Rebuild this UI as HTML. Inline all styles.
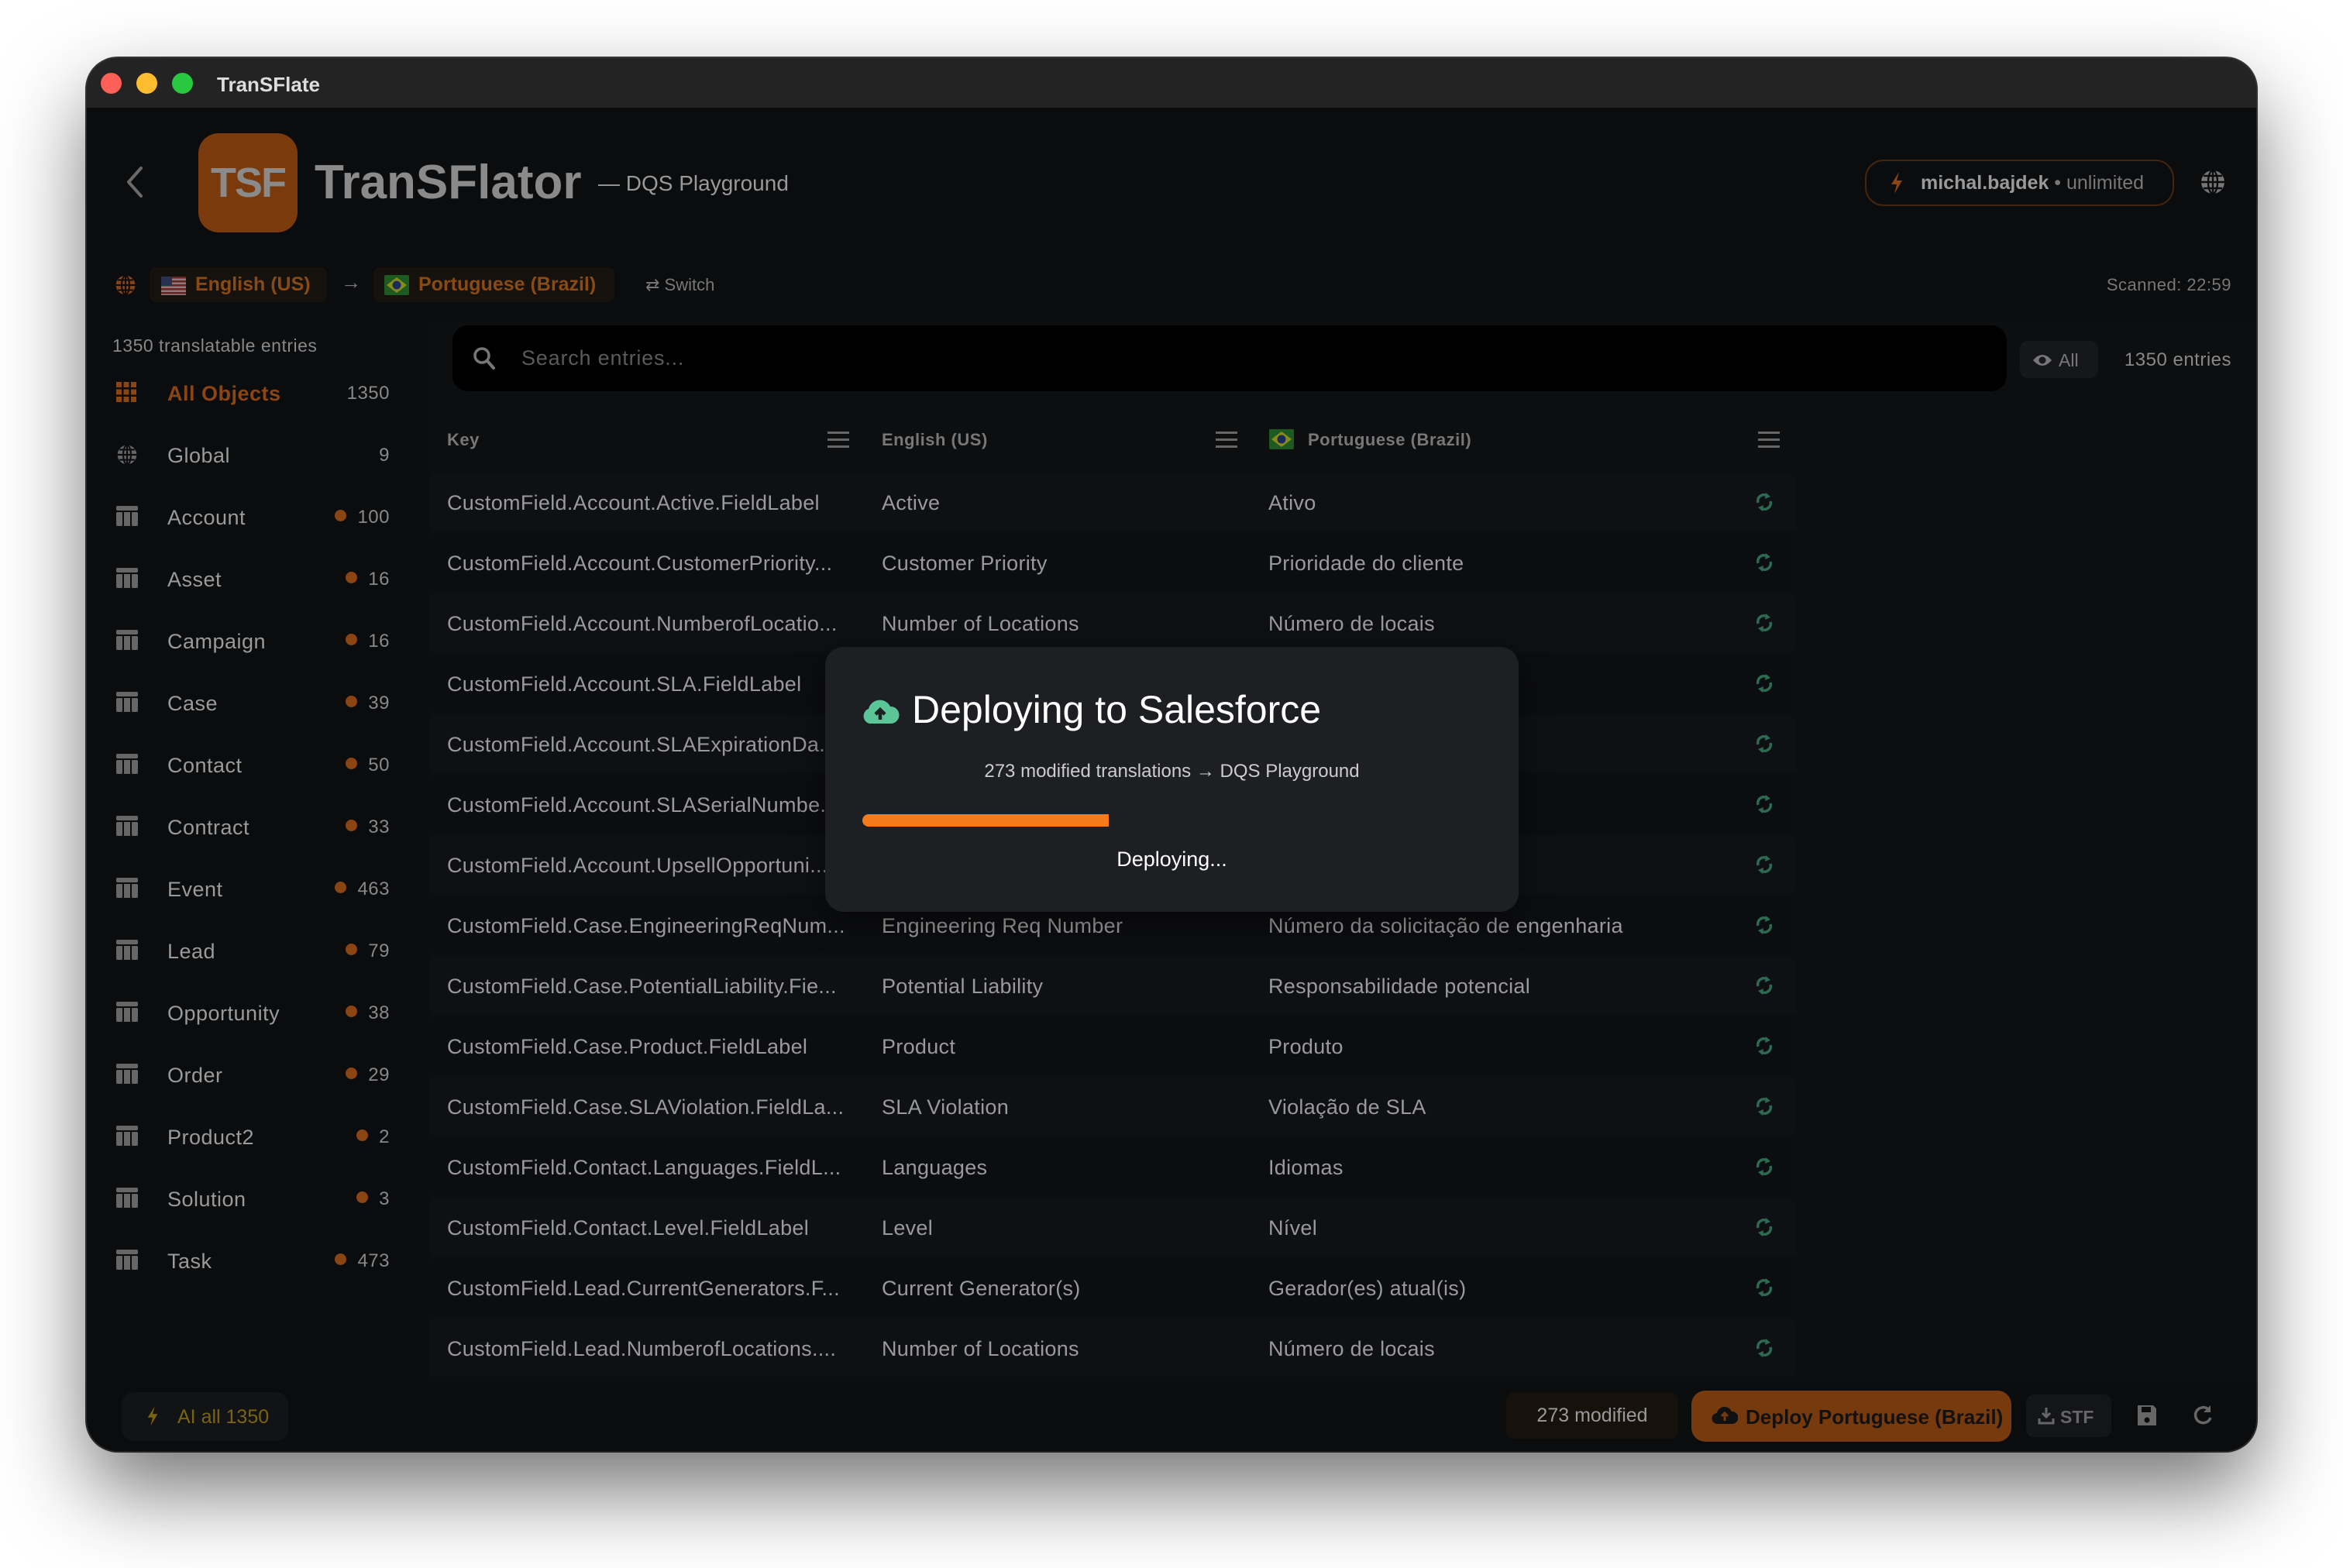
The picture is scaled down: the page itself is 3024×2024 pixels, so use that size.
<!DOCTYPE html>
<html><head><meta charset="utf-8"><style>
*{margin:0;padding:0;box-sizing:border-box}
body{width:3024px;height:2024px;background:#fff;position:relative;overflow:hidden;font-family:"Liberation Sans",sans-serif}
.win{position:absolute;left:112px;top:75px;width:2800px;height:1798px;border-radius:40px;background:#0b0c0e;overflow:hidden;box-shadow:0 50px 110px rgba(0,0,0,.55),0 0 0 2px #3a3a3a}
.tb{position:absolute;left:0;top:0;width:100%;height:64px;background:#232323}
.dot{position:absolute;top:19px;width:27px;height:27px;border-radius:50%}
.a{position:absolute;white-space:nowrap}
.it{position:absolute;left:0;width:391px;height:60px}
.it svg{position:absolute;left:38px;top:16px}
.lbl{position:absolute;left:104px;top:16px;font-size:27px;color:#9a9a9a;letter-spacing:.5px}
.cnt{position:absolute;right:0;top:17px;font-size:24px;color:#888;letter-spacing:.5px}
.od{display:inline-block;width:15px;height:15px;border-radius:50%;background:#8a4512;margin-right:14px;vertical-align:2px}
.row{position:absolute;left:443px;width:1763px;height:74px;background:#0f1013;border-radius:6px}
.row.b{background:#0c0d10}
.row div{position:absolute;top:23px;font-size:27px;color:#9a9a9a;white-space:nowrap;letter-spacing:.3px}
.row .k{left:22px}.row .e{left:583px}.row .p{left:1082px}
.row svg{position:absolute;left:1710px;top:24px}
.menu{position:absolute;width:28px;height:21px;border-top:3px solid #666;border-bottom:3px solid #666}
.menu i{display:block;margin-top:6px;height:3px;background:#666}
.hd{position:absolute;top:480px;font-size:22px;font-weight:bold;color:#777;letter-spacing:.5px}
</style></head><body>
<svg width="0" height="0" style="position:absolute"><defs>
<symbol id="tbl" viewBox="0 0 28 26"><rect x="0" y="0" width="28" height="6" rx="2" fill="#666"/><rect x="0" y="8" width="8" height="18" rx="1.5" fill="#666"/><rect x="10" y="8" width="8" height="18" fill="#666"/><rect x="20" y="8" width="8" height="18" rx="1.5" fill="#666"/></symbol>
<symbol id="rf" viewBox="0 0 24 26"><path d="M4 14 A8 8 0 0 1 16 5" stroke="#2d6a52" stroke-width="3.5" fill="none"/><path d="M14 1 L20 6 L13 9Z" fill="#2d6a52"/><path d="M20 12 A8 8 0 0 1 8 21" stroke="#2d6a52" stroke-width="3.5" fill="none"/><path d="M10 25 L4 20 L11 17Z" fill="#2d6a52"/></symbol>
</defs></svg>
<div class="win">
 <div class="tb">
  <div class="dot" style="left:18px;background:#fe5f57"></div>
  <div class="dot" style="left:64px;background:#febc2e"></div>
  <div class="dot" style="left:110px;background:#28c840"></div>
  <div class="a" style="left:168px;top:19px;font-size:26px;font-weight:bold;color:#ddd">TranSFlate</div>
 </div>

 <svg class="a" style="left:46px;top:138px" width="30" height="44" viewBox="0 0 30 44"><path d="M24 4 L8 22 L24 40" stroke="#6a6a6a" stroke-width="4" fill="none" stroke-linecap="round" stroke-linejoin="round"/></svg>
 <div class="a" style="left:144px;top:97px;width:128px;height:128px;border-radius:26px;background:#7a3a0c;color:#8a8a8a;font-weight:bold;font-size:54px;line-height:128px;text-align:center;letter-spacing:-2px">TSF</div>
 <div class="a" style="left:294px;top:126px;font-size:62px;font-weight:bold;color:#8a8a8a;line-height:70px">TranSFlator</div>
 <div class="a" style="left:660px;top:146px;font-size:28px;color:#999">— DQS Playground</div>
 <div class="a" style="left:2295px;top:131px;width:399px;height:60px;border:2px solid #43260f;border-radius:24px"></div>
 <svg class="a" style="left:2326px;top:146px" width="20" height="30" viewBox="0 0 20 30"><path d="M13 1 L3 17 H10 L7 29 L17 12 H10 Z" fill="#8a4512"/></svg>
 <div class="a" style="left:2367px;top:147px;font-size:25px;font-weight:bold;color:#999">michal.bajdek <span style="font-weight:normal;color:#777">• unlimited</span></div>
 <svg class="a" style="left:2727px;top:143px" width="34" height="34" viewBox="0 0 34 34"><circle cx="17" cy="17" r="15" fill="#777"/><g stroke="#0b0c0e" stroke-width="2.4" fill="none"><ellipse cx="17" cy="17" rx="6" ry="15"/><path d="M2 17H32M5 9H29M5 25H29M17 2V32"/></g></svg>

 <svg class="a" style="left:36px;top:279px" width="28" height="28" viewBox="0 0 34 34"><circle cx="17" cy="17" r="15" fill="#8a4512"/><g stroke="#0b0c0e" stroke-width="2.6" fill="none"><ellipse cx="17" cy="17" rx="6" ry="15"/><path d="M2 17H32M5 9H29M5 25H29M17 2V32"/></g></svg>
 <div class="a" style="left:81px;top:270px;width:229px;height:45px;background:#15110d;border-radius:8px"></div>
 <svg class="a" style="left:96px;top:282px" width="32" height="24" viewBox="0 0 32 24"><rect width="32" height="24" fill="#8a7a7a"/><g fill="#6a2222"><rect y="0" width="32" height="2.5"/><rect y="5" width="32" height="2.5"/><rect y="10" width="32" height="2.5"/><rect y="15" width="32" height="2.5"/><rect y="20" width="32" height="2.5"/></g><rect width="14" height="12" fill="#2a3050"/></svg>
 <div class="a" style="left:140px;top:278px;font-size:25px;font-weight:bold;color:#8a4a14">English (US)</div>
 <div class="a" style="left:328px;top:274px;font-size:26px;color:#777">→</div>
 <div class="a" style="left:370px;top:270px;width:311px;height:45px;background:#15110d;border-radius:8px"></div>
 <svg class="a" style="left:384px;top:280px" width="32" height="26" viewBox="0 0 32 26"><rect width="32" height="26" rx="2" fill="#1d5a22"/><path d="M16 3 L29 13 L16 23 L3 13Z" fill="#8a8a1a"/><circle cx="16" cy="13" r="5.5" fill="#1a2a5a"/></svg>
 <div class="a" style="left:428px;top:278px;font-size:25px;font-weight:bold;color:#8a4a14">Portuguese (Brazil)</div>
 <div class="a" style="left:721px;top:280px;font-size:22px;color:#777">⇄ Switch</div>
 <div class="a" style="right:32px;top:280px;font-size:22px;color:#777;letter-spacing:.5px">Scanned: 22:59</div>

 <div class="a" style="left:33px;top:358px;font-size:23px;color:#888;letter-spacing:.5px">1350 translatable entries</div>
 <div class="it" style="top:402px"><svg width="26" height="26" viewBox="0 0 26 26" fill="#8a4512"><rect x="0" y="0" width="7" height="7"/><rect x="9.5" y="0" width="7" height="7"/><rect x="19" y="0" width="7" height="7"/><rect x="0" y="9.5" width="7" height="7"/><rect x="9.5" y="9.5" width="7" height="7"/><rect x="19" y="9.5" width="7" height="7"/><rect x="0" y="19" width="7" height="7"/><rect x="9.5" y="19" width="7" height="7"/><rect x="19" y="19" width="7" height="7"/></svg><div class="lbl" style="color:#8a4512;font-weight:bold">All Objects</div><div class="cnt">1350</div></div>
 <div class="it" style="top:482px"><svg width="28" height="28" viewBox="0 0 34 34"><circle cx="17" cy="17" r="15" fill="#666"/><g stroke="#0b0c0e" stroke-width="2.6" fill="none"><ellipse cx="17" cy="17" rx="6" ry="15"/><path d="M2 17H32M5 9H29M5 25H29M17 2V32"/></g></svg><div class="lbl">Global</div><div class="cnt">9</div></div>
 <div class="it" style="top:562px"><svg width="28" height="26"><use href="#tbl"/></svg><div class="lbl">Account</div><div class="cnt"><span class="od"></span>100</div></div>
 <div class="it" style="top:642px"><svg width="28" height="26"><use href="#tbl"/></svg><div class="lbl">Asset</div><div class="cnt"><span class="od"></span>16</div></div>
 <div class="it" style="top:722px"><svg width="28" height="26"><use href="#tbl"/></svg><div class="lbl">Campaign</div><div class="cnt"><span class="od"></span>16</div></div>
 <div class="it" style="top:802px"><svg width="28" height="26"><use href="#tbl"/></svg><div class="lbl">Case</div><div class="cnt"><span class="od"></span>39</div></div>
 <div class="it" style="top:882px"><svg width="28" height="26"><use href="#tbl"/></svg><div class="lbl">Contact</div><div class="cnt"><span class="od"></span>50</div></div>
 <div class="it" style="top:962px"><svg width="28" height="26"><use href="#tbl"/></svg><div class="lbl">Contract</div><div class="cnt"><span class="od"></span>33</div></div>
 <div class="it" style="top:1042px"><svg width="28" height="26"><use href="#tbl"/></svg><div class="lbl">Event</div><div class="cnt"><span class="od"></span>463</div></div>
 <div class="it" style="top:1122px"><svg width="28" height="26"><use href="#tbl"/></svg><div class="lbl">Lead</div><div class="cnt"><span class="od"></span>79</div></div>
 <div class="it" style="top:1202px"><svg width="28" height="26"><use href="#tbl"/></svg><div class="lbl">Opportunity</div><div class="cnt"><span class="od"></span>38</div></div>
 <div class="it" style="top:1282px"><svg width="28" height="26"><use href="#tbl"/></svg><div class="lbl">Order</div><div class="cnt"><span class="od"></span>29</div></div>
 <div class="it" style="top:1362px"><svg width="28" height="26"><use href="#tbl"/></svg><div class="lbl">Product2</div><div class="cnt"><span class="od"></span>2</div></div>
 <div class="it" style="top:1442px"><svg width="28" height="26"><use href="#tbl"/></svg><div class="lbl">Solution</div><div class="cnt"><span class="od"></span>3</div></div>
 <div class="it" style="top:1522px"><svg width="28" height="26"><use href="#tbl"/></svg><div class="lbl">Task</div><div class="cnt"><span class="od"></span>473</div></div>

 <div class="a" style="left:441px;top:340px;width:2359px;height:1370px;background:#0d0e10"></div>
 <div class="a" style="left:472px;top:345px;width:2006px;height:85px;background:#000;border-radius:20px"></div>
 <svg class="a" style="left:498px;top:372px" width="30" height="32" viewBox="0 0 30 32"><circle cx="12" cy="12" r="9" stroke="#777" stroke-width="3.5" fill="none"/><path d="M19 19 L27 28" stroke="#777" stroke-width="4" stroke-linecap="round"/></svg>
 <div class="a" style="left:561px;top:372px;font-size:27px;color:#5a5a5a;letter-spacing:.8px">Search entries...</div>
 <div class="a" style="left:2495px;top:365px;width:101px;height:48px;background:#15171a;border-radius:10px"></div>
 <svg class="a" style="left:2511px;top:381px" width="26" height="18" viewBox="0 0 26 18"><path d="M1 9 Q13 -5 25 9 Q13 23 1 9Z" fill="#777"/><circle cx="13" cy="9" r="4.5" fill="#15171a"/></svg>
 <div class="a" style="left:2545px;top:377px;font-size:23px;color:#777">All</div>
 <div class="a" style="right:32px;top:376px;font-size:24px;color:#888;letter-spacing:.5px">1350 entries</div>

 <div class="hd" style="left:465px">Key</div>
 <div class="menu" style="left:956px;top:482px"><i></i></div>
 <div class="hd" style="left:1026px">English (US)</div>
 <div class="menu" style="left:1457px;top:482px"><i></i></div>
 <svg class="a" style="left:1525px;top:479px" width="34" height="26" viewBox="0 0 32 26"><rect width="32" height="26" rx="2" fill="#1d5a22"/><path d="M16 3 L29 13 L16 23 L3 13Z" fill="#8a8a1a"/><circle cx="16" cy="13" r="5.5" fill="#1a2a5a"/></svg>
 <div class="hd" style="left:1576px">Portuguese (Brazil)</div>
 <div class="menu" style="left:2157px;top:482px"><i></i></div>

 <div class="row" style="top:536px"><div class="k">CustomField.Account.Active.FieldLabel</div><div class="e">Active</div><div class="p">Ativo</div><svg width="24" height="26"><use href="#rf"/></svg></div>
 <div class="row b" style="top:614px"><div class="k">CustomField.Account.CustomerPriority...</div><div class="e">Customer Priority</div><div class="p">Prioridade do cliente</div><svg width="24" height="26"><use href="#rf"/></svg></div>
 <div class="row" style="top:692px"><div class="k">CustomField.Account.NumberofLocatio...</div><div class="e">Number of Locations</div><div class="p">Número de locais</div><svg width="24" height="26"><use href="#rf"/></svg></div>
 <div class="row b" style="top:770px"><div class="k">CustomField.Account.SLA.FieldLabel</div><div class="e">SLA</div><div class="p">SLA</div><svg width="24" height="26"><use href="#rf"/></svg></div>
 <div class="row" style="top:848px"><div class="k">CustomField.Account.SLAExpirationDa...</div><div class="e">SLA Expiration Date</div><div class="p">Data de expiração do SLA</div><svg width="24" height="26"><use href="#rf"/></svg></div>
 <div class="row b" style="top:926px"><div class="k">CustomField.Account.SLASerialNumbe...</div><div class="e">SLA Serial Number</div><div class="p">Número de série do SLA</div><svg width="24" height="26"><use href="#rf"/></svg></div>
 <div class="row" style="top:1004px"><div class="k">CustomField.Account.UpsellOpportuni...</div><div class="e">Upsell Opportunity</div><div class="p">Oportunidade de upsell</div><svg width="24" height="26"><use href="#rf"/></svg></div>
 <div class="row b" style="top:1082px"><div class="k">CustomField.Case.EngineeringReqNum...</div><div class="e">Engineering Req Number</div><div class="p">Número da solicitação de engenharia</div><svg width="24" height="26"><use href="#rf"/></svg></div>
 <div class="row" style="top:1160px"><div class="k">CustomField.Case.PotentialLiability.Fie...</div><div class="e">Potential Liability</div><div class="p">Responsabilidade potencial</div><svg width="24" height="26"><use href="#rf"/></svg></div>
 <div class="row b" style="top:1238px"><div class="k">CustomField.Case.Product.FieldLabel</div><div class="e">Product</div><div class="p">Produto</div><svg width="24" height="26"><use href="#rf"/></svg></div>
 <div class="row" style="top:1316px"><div class="k">CustomField.Case.SLAViolation.FieldLa...</div><div class="e">SLA Violation</div><div class="p">Violação de SLA</div><svg width="24" height="26"><use href="#rf"/></svg></div>
 <div class="row b" style="top:1394px"><div class="k">CustomField.Contact.Languages.FieldL...</div><div class="e">Languages</div><div class="p">Idiomas</div><svg width="24" height="26"><use href="#rf"/></svg></div>
 <div class="row" style="top:1472px"><div class="k">CustomField.Contact.Level.FieldLabel</div><div class="e">Level</div><div class="p">Nível</div><svg width="24" height="26"><use href="#rf"/></svg></div>
 <div class="row b" style="top:1550px"><div class="k">CustomField.Lead.CurrentGenerators.F...</div><div class="e">Current Generator(s)</div><div class="p">Gerador(es) atual(is)</div><svg width="24" height="26"><use href="#rf"/></svg></div>
 <div class="row" style="top:1628px"><div class="k">CustomField.Lead.NumberofLocations....</div><div class="e">Number of Locations</div><div class="p">Número de locais</div><svg width="24" height="26"><use href="#rf"/></svg></div>

 <!-- footer -->
 <div class="a" style="left:45px;top:1722px;width:215px;height:63px;background:#111315;border-radius:16px"></div>
 <svg class="a" style="left:76px;top:1738px" width="18" height="30" viewBox="0 0 20 30"><path d="M13 1 L3 17 H10 L7 29 L17 12 H10 Z" fill="#7a6410"/></svg>
 <div class="a" style="left:117px;top:1740px;font-size:25px;color:#7a6410">AI all 1350</div>
 <div class="a" style="left:1832px;top:1722px;width:222px;height:60px;background:#17110c;border-radius:10px;font-size:25px;color:#999;text-align:center;line-height:60px">273 modified</div>
 <div class="a" style="left:2071px;top:1720px;width:413px;height:66px;background:#763a0c;border-radius:18px"></div>
 <svg class="a" style="left:2097px;top:1737px" width="34" height="28" viewBox="0 0 34 28"><path d="M8 26 A7 7 0 0 1 7 12 A10 10 0 0 1 26 10 A8 8 0 0 1 27 26Z" fill="#111"/><path d="M17 22 V13 M13 16 L17 12 L21 16" stroke="#763a0c" stroke-width="3" fill="none"/></svg>
 <div class="a" style="left:2141px;top:1739px;font-size:26px;font-weight:bold;color:#111">Deploy Portuguese (Brazil)</div>
 <div class="a" style="left:2503px;top:1725px;width:110px;height:55px;background:#141518;border-radius:10px"></div>
 <svg class="a" style="left:2518px;top:1740px" width="22" height="24" viewBox="0 0 22 24"><path d="M11 2 V14 M6 9 L11 14 L16 9 M2 16 V22 H20 V16" stroke="#666" stroke-width="3" fill="none"/></svg>
 <div class="a" style="left:2547px;top:1741px;font-size:23px;font-weight:bold;color:#666">STF</div>
 <svg class="a" style="left:2645px;top:1737px" width="28" height="30" viewBox="0 0 28 30"><path d="M2 2 H22 L26 6 V28 H2Z" fill="#666"/><rect x="7" y="4" width="12" height="7" fill="#0b0c0e"/><circle cx="14" cy="21" r="3.5" fill="#0b0c0e"/></svg>
 <svg class="a" style="left:2717px;top:1737px" width="28" height="30" viewBox="0 0 28 30"><path d="M22 8 A10 10 0 1 0 24 18" stroke="#666" stroke-width="3.5" fill="none"/><path d="M24 2 V11 H15Z" fill="#666"/></svg>

 <!-- modal -->
 <div class="a" style="left:953px;top:760px;width:895px;height:342px;background:#1e1f23;border-radius:24px;box-shadow:0 10px 40px rgba(0,0,0,.5)">
  <svg class="a" style="left:46px;top:65px" width="50" height="36" viewBox="0 0 50 36"><path d="M11 34 A10 10 0 0 1 10 15 A15 15 0 0 1 38 12 A11 11 0 0 1 39 34Z" fill="#5cc597"/><path d="M25 29 V17 M19 22 L25 16 L31 22" stroke="#1e1f23" stroke-width="4.5" fill="none"/></svg>
  <div class="a" style="left:112px;top:52px;font-size:50px;color:#fff">Deploying to Salesforce</div>
  <div class="a" style="left:0;width:895px;top:147px;text-align:center;font-size:24px;color:#ccc">273 modified translations → DQS Playground</div>
  <div class="a" style="left:48px;top:216px;width:318px;height:16px;background:#f47a1a;border-radius:8px 0 0 8px"></div>
  <div class="a" style="left:0;width:895px;top:259px;text-align:center;font-size:27px;color:#fff">Deploying...</div>
 </div>
</div>
</body></html>
